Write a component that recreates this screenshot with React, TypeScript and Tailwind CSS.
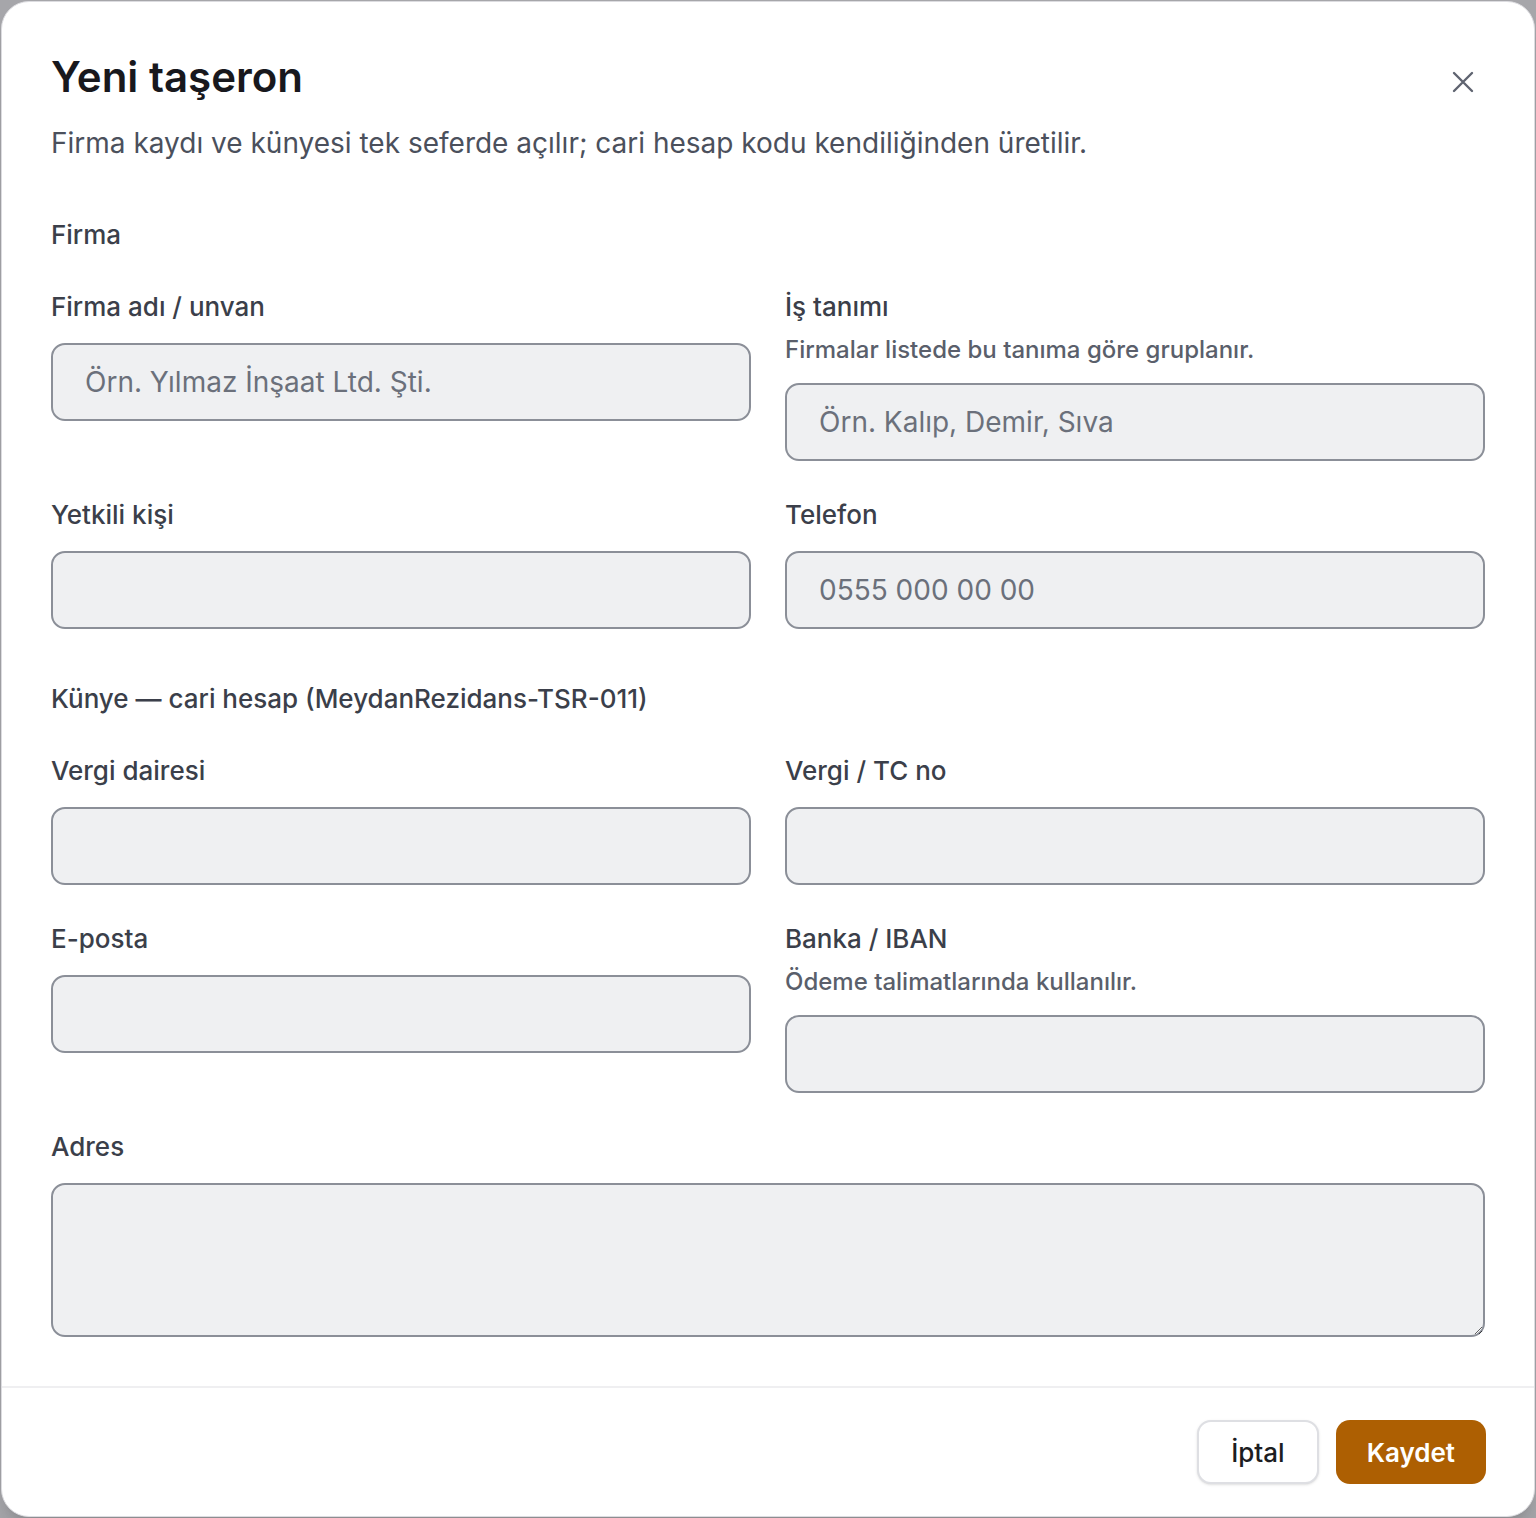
import type { ReactNode } from "react";

const inputCls =
  "block w-full h-[78px] rounded-[14px] border-2 border-[#8b8f98] bg-[#eff0f2] px-8 text-[28px] text-[#1f2229] placeholder:text-[#6b707b] outline-none focus:border-[#ad5f02]";

function Field({
  label,
  hint,
  placeholder,
}: {
  label: string;
  hint?: string;
  placeholder?: string;
}) {
  return (
    <label className="block">
      <span className="block text-[26px] leading-[36px] font-medium text-[#3b3f4a]">{label}</span>
      {hint && (
        <span className="mt-2 block text-[24px] leading-[34px] font-medium text-[#5a5f6b]">{hint}</span>
      )}
      <input type="text" placeholder={placeholder} className={`${inputCls} ${hint ? "mt-4" : "mt-[18px]"}`} />
    </label>
  );
}

function SectionTitle({ children, className = "" }: { children: ReactNode; className?: string }) {
  return (
    <h3 className={`text-[26px] leading-[36px] font-medium text-[#3b3f4a] ${className}`}>{children}</h3>
  );
}

export default function App() {
  return (
    <div className="min-h-[1518px] bg-[#a6a6aa] pt-px font-['Inter','Noto_Sans',sans-serif]">
      <div className="ml-px w-[1534px] rounded-[28px] border border-[#dcdce0] bg-white shadow-xl overflow-hidden">
        <div className="px-[49px] pt-[50px] pb-[49px]">
          {/* Header */}
          <div className="flex items-start justify-between">
            <h2 className="text-[42px] leading-[50px] font-semibold text-[#18181d]">Yeni taşeron</h2>
            <button
              type="button"
              className="mt-[8px] flex h-11 w-11 items-center justify-center rounded-lg text-[#5f6470] hover:bg-gray-100"
              title="Kapat"
            >
              <svg width="22" height="22" viewBox="0 0 22 22" fill="none" stroke="currentColor" strokeWidth="2.4" strokeLinecap="round">
                <path d="M2 2 20 20M20 2 2 20" />
              </svg>
            </button>
          </div>
          <p className="mt-[19px] text-[28px] leading-[40px] text-[#4b505c]">
            Firma kaydı ve künyesi tek seferde açılır; cari hesap kodu kendiliğinden üretilir.
          </p>

          {/* Firma */}
          <SectionTitle className="mt-[54px]">Firma</SectionTitle>
          <div className="mt-9 grid grid-cols-2 gap-x-[34px] gap-y-9 items-start">
            <Field label="Firma adı / unvan" placeholder="Örn. Yılmaz İnşaat Ltd. Şti." />
            <Field
              label="İş tanımı"
              hint="Firmalar listede bu tanıma göre gruplanır."
              placeholder="Örn. Kalıp, Demir, Sıva"
            />
            <Field label="Yetkili kişi" />
            <Field label="Telefon" placeholder="0555 000 00 00" />
          </div>

          {/* Künye */}
          <SectionTitle className="mt-[52px]">Künye — cari hesap (MeydanRezidans-TSR-011)</SectionTitle>
          <div className="mt-9 grid grid-cols-2 gap-x-[34px] gap-y-9 items-start">
            <Field label="Vergi dairesi" />
            <Field label="Vergi / TC no" />
            <Field label="E-posta" />
            <Field label="Banka / IBAN" hint="Ödeme talimatlarında kullanılır." />
            <label className="col-span-2 block">
              <span className="block text-[26px] leading-[36px] font-medium text-[#3b3f4a]">Adres</span>
              <textarea className="mt-[18px] block h-[154px] w-full rounded-[14px] border-2 border-[#8b8f98] bg-[#eff0f2] px-8 py-5 text-[28px] text-[#1f2229] outline-none focus:border-[#ad5f02]" />
            </label>
          </div>
        </div>

        {/* Footer */}
        <div className="flex justify-end gap-[17px] border-t-2 border-[#efeff1] px-[48px] pt-[32px] pb-[32px]">
          <button
            type="button"
            className="h-16 rounded-[14px] border-2 border-[#dedfe3] bg-white px-8 text-[26px] font-medium text-[#1c1d22] shadow-sm"
          >
            İptal
          </button>
          <button
            type="button"
            className="h-16 rounded-[14px] bg-[#ad5f02] px-[31px] text-[26px] font-semibold text-white"
          >
            Kaydet
          </button>
        </div>
      </div>
    </div>
  );
}
